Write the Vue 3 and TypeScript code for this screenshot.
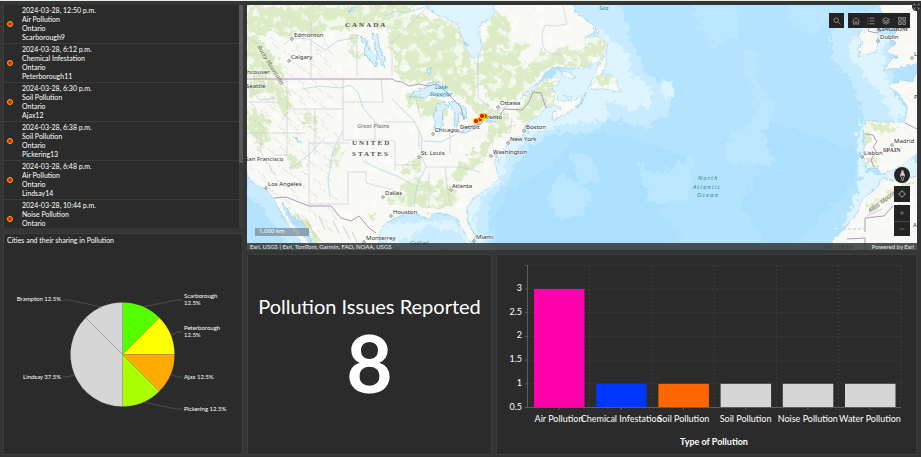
<script setup lang="ts">
interface Report { time: string; kind: string; province: string; place?: string }
interface Slice { label: string[]; value: number; color: string; x: number; y: number; anchor: 'start' | 'end'; leader: string }
interface Bar { label: string; value: number; color: string }
interface Place { name: string; x: number; y: number; cx?: number; cy?: number }

const reports: Report[] = [
  { time: '2024-03-28, 12:50 p.m.', kind: 'Air Pollution', province: 'Ontario', place: 'Scarborough9' },
  { time: '2024-03-28, 6:12 p.m.', kind: 'Chemical Infestation', province: 'Ontario', place: 'Peterborough11' },
  { time: '2024-03-28, 6:30 p.m.', kind: 'Soil Pollution', province: 'Ontario', place: 'Ajax12' },
  { time: '2024-03-28, 6:38 p.m.', kind: 'Soil Pollution', province: 'Ontario', place: 'Pickering13' },
  { time: '2024-03-28, 6:48 p.m.', kind: 'Air Pollution', province: 'Ontario', place: 'Lindsay14' },
  { time: '2024-03-28, 10:44 p.m.', kind: 'Noise Pollution', province: 'Ontario' },
]

const slices: Slice[] = [
  { label: ['Scarborough', '12.5%'], value: 12.5, color: '#55ff00', x: 184, y: 298, anchor: 'start', leader: 'M143 307L176 300H182' },
  { label: ['Peterborough', '12.5%'], value: 12.5, color: '#ffff00', x: 184, y: 330, anchor: 'start', leader: 'M171 335L178 332H182' },
  { label: ['Ajax 12.5%'], value: 12.5, color: '#ffaa00', x: 184, y: 379, anchor: 'start', leader: 'M171 375L178 377H182' },
  { label: ['Pickering 12.5%'], value: 12.5, color: '#aaff00', x: 184, y: 411, anchor: 'start', leader: 'M143 402L176 409H182' },
  { label: ['Lindsay 37.5%'], value: 37.5, color: '#d6d6d6', x: 61, y: 379, anchor: 'end', leader: 'M74 375L67 377H63' },
  { label: ['Brampton 12.5%'], value: 12.5, color: '#d6d6d6', x: 61, y: 301, anchor: 'end', leader: 'M102 307L69 300H63' },
]
const pie = { cx: 122.5, cy: 354.5, r: 52 }
const onCircle = (percent: number): string => {
  const a = (percent / 100) * Math.PI * 2
  return `${(pie.cx + pie.r * Math.sin(a)).toFixed(2)} ${(pie.cy - pie.r * Math.cos(a)).toFixed(2)}`
}
let turned = 0
const wedges = slices.map((s) => {
  const from = turned
  turned += s.value
  return { ...s, d: `M${pie.cx} ${pie.cy}L${onCircle(from)}A${pie.r} ${pie.r} 0 0 1 ${onCircle(turned)}Z` }
})

const bars: Bar[] = [
  { label: 'Air Pollution', value: 3, color: '#ff00aa' },
  { label: 'Chemical Infestation', value: 1, color: '#0036ff' },
  { label: 'Soil Pollution', value: 1, color: '#ff6600' },
  { label: 'Soil Pollution', value: 1, color: '#d6d6d6' },
  { label: 'Noise Pollution', value: 1, color: '#d6d6d6' },
  { label: 'Water Pollution', value: 1, color: '#d6d6d6' },
]
const ticks = [0.5, 1, 1.5, 2, 2.5, 3]
const yOf = (v: number): number => 407.5 - (v - 0.5) * 47.4
const xOf = (i: number): number => 559 + i * 62.2

const places: Place[] = [
  { name: 'Edmonton', x: 294, y: 37, cx: 292, cy: 39 },
  { name: 'Calgary', x: 291, y: 59, cx: 289, cy: 61 },
  { name: 'ncouver', x: 247, y: 74 },
  { name: 'Seattle', x: 246, y: 88 },
  { name: 'San Francisco', x: 245, y: 161 },
  { name: 'Los Angeles', x: 268, y: 186, cx: 266, cy: 188 },
  { name: 'Monterrey', x: 366, y: 240, cx: 364, cy: 242 },
  { name: 'Dallas', x: 385, y: 195, cx: 383, cy: 197 },
  { name: 'Houston', x: 393, y: 214, cx: 391, cy: 216 },
  { name: 'St. Louis', x: 421, y: 155, cx: 419, cy: 157 },
  { name: 'Atlanta', x: 452, y: 188, cx: 451, cy: 190 },
  { name: 'Miami', x: 476, y: 239, cx: 474, cy: 241 },
  { name: 'Chicago', x: 435, y: 132, cx: 433, cy: 134 },
  { name: 'Detroit', x: 460, y: 129, cx: 458, cy: 131 },
  { name: 'Ottawa', x: 500, y: 105, cx: 498, cy: 107 },
  { name: 'Toronto', x: 480, y: 119 },
  { name: 'Boston', x: 526, y: 129, cx: 524, cy: 131 },
  { name: 'New York', x: 510, y: 141, cx: 508, cy: 143 },
  { name: 'Washington', x: 493, y: 154, cx: 491, cy: 156 },
  { name: 'Dublin', x: 880, y: 39, cx: 878, cy: 41 },
  { name: 'Madrid', x: 894, y: 143, cx: 892, cy: 145 },
  { name: 'Lisbon', x: 864, y: 155, cx: 862, cy: 157 },
  { name: 'L', x: 914, y: 56, cx: 912, cy: 58 },
  { name: 'P', x: 914, y: 99 },
  { name: 'A', x: 913, y: 227 },
]

const america = 'M240 0H427L426 8L437 15L448 19L457 24L462 37L466 49L472 58L479 58L482 44L478 28L484 21L493 17L495 0H571L577 13L588 21L598 31L584 38L601 37L607 43L606 54L597 62L583 68L567 68L554 67L546 72L540 81L530 88L519 99L532 92L542 81L552 77L560 79L558 85L550 87L557 94L558 101L568 101L577 100L581 95L582 104L574 109L562 116L553 121L552 113L561 108L555 105L545 108L540 115L528 121L525 127L526 131L530 133L520 136L509 141L503 150L499 163L496 152L495 163L499 178L490 187L475 197L467 207L468 222L475 235L474 243L469 240L462 228L457 219L447 214L438 213L432 214L429 219L411 213L398 216L384 225L379 232L378 256H316L309 232L302 222L291 215L282 202L286 214L294 225L307 240L312 254H307L299 239L288 225L281 213L274 199L266 189L257 185L248 177L240 163Z'
const europe = 'M925 62L903 67L892 69L883 70L892 59L898 57L885 52L896 43L890 39L898 31L895 23L886 18L880 10L878 0H925ZM925 70L916 74L913 82L903 80L897 83L888 83L892 89L900 95L904 101L907 108L905 123L893 122L881 122L867 121L863 126L865 140L863 155L867 168L877 168L882 174L893 170L903 165L909 159L917 155L925 152Z'
const africa = 'M882 178L895 181L925 174V256H830L833 240L847 225L858 212L862 200L877 188Z'
const ireland = 'M857 33L864 31L867 28L873 28L877 32L878 41L876 52L866 54L858 57L860 52L857 49L863 43Z'
const newfoundland = 'M588 89L594 77L600 62L605 57L607 61L602 75L609 75L617 79L617 86L622 92L613 90L602 89Z'

/* Short ridge strokes scattered over the western mountain ranges. */
const ridges = Array.from({ length: 260 }, (_, i) => {
  const x = 248 + ((i * 37) % 83) + ((i * 13) % 7)
  const y = 36 + ((i * 53) % 197)
  return `M${x} ${y}l${1 + (i % 3)} ${2 + (i % 3)}l${i % 2} 1`
}).join('')

const greens: string[] = [
  'M247 5H418L405 14L392 18L381 28L370 22L351 30L332 28L317 36L299 32L286 39L270 31L260 36L247 30Z',
  'M247 34L259 36L272 53L284 70L286 88L292 105L285 118L276 101L267 91L253 97L247 91Z',
  'M247 105L258 108L268 124L270 140L258 150L247 125Z',
  'M400 18L421 12L437 19L458 27L470 52L472 67L480 78L473 101L450 96L434 80L411 84L394 72L396 55L388 42L387 24Z',
  'M415 91L423 99L434 98L448 104L445 120L428 116L414 107L404 98Z',
  'M494 13L512 20L509 43L530 44L519 59L528 66L544 50L556 61L546 70L522 94L506 103L490 100L480 83L470 66L481 55L486 34Z',
  'M590 31L606 39L605 53L585 66L560 67L551 53L566 48L579 51L589 43Z',
  'M541 83L559 80L552 90L555 103L540 112L526 122L514 123L522 102Z',
  'M469 101L486 103L500 112L510 117L512 128L501 136L489 146L486 162L472 169L458 183L449 176L461 163L474 151L488 137L493 123L475 115Z',
  'M415 160L426 155L418 171L408 174L399 169Z',
  'M414 175L427 184L445 180L458 191L461 202L446 209L428 210L417 203L411 209L388 202L384 191L401 190Z',
  'M337 145L343 153L334 170L327 163Z', 'M367 215L378 211L374 219L365 217Z',
  'M282 208L297 215L309 222L323 242H315L303 228Z',
  'M350 35L361 38L352 51L367 55L363 61L350 55Z',
  'M300 112L314 118L318 130L308 128Z', 'M285 152L298 158L305 172L292 170Z',
  'M596 75L614 80L611 86L594 86Z', 'M864 123L886 124L901 128L892 133L871 131L867 146L863 141Z',
  'M864 160L875 160L876 167L867 168Z', 'M866 207L888 193L903 183L917 181L903 188L887 200L872 211Z',
]
</script>

<template>
  <main class="dashboard">
    <div class="side">
      <section class="panel reports" aria-label="Reports">
        <ul class="report-list">
          <li v-for="(r, i) in reports" :key="i" class="report">
            <span class="marker"></span>
            <div class="report-text">
              <div>{{ r.time }}</div>
              <div>{{ r.kind }}</div>
              <div>{{ r.province }}</div>
              <div v-if="r.place">{{ r.place }}</div>
            </div>
          </li>
        </ul>
        <div class="track"><div class="thumb"></div></div>
      </section>

      <section class="panel cities">
        <h2 class="cities-title">Cities and their sharing in Pollution</h2>
        <svg class="chart" viewBox="4 248 238 206">
          <g v-for="w in wedges" :key="w.label[0]">
            <path :d="w.d" :fill="w.color" stroke="#888" stroke-opacity=".22" stroke-width=".6" />
            <path :d="w.leader" fill="none" stroke="#5c5c5c" stroke-width=".7" />
            <text class="pie-label" :x="w.x" :y="w.y" :text-anchor="w.anchor">
              <tspan v-for="(line, i) in w.label" :key="line" :x="w.x" :dy="i * 7">{{ line }}</tspan>
            </text>
          </g>
        </svg>
      </section>
    </div>

    <div class="content">
      <section class="map" aria-label="Map">
        <svg class="map-canvas" viewBox="247 5 670 245" preserveAspectRatio="xMidYMid slice">
          <defs>
            <filter id="rough" x="-5%" y="-5%" width="110%" height="110%">
              <feTurbulence type="fractalNoise" baseFrequency=".16" numOctaves="3" seed="4" />
              <feDisplacementMap in="SourceGraphic" scale="14" xChannelSelector="R" yChannelSelector="G" />
            </filter>
            <filter id="coast" x="-2%" y="-2%" width="104%" height="104%">
              <feTurbulence type="fractalNoise" baseFrequency=".3" numOctaves="2" seed="9" />
              <feDisplacementMap in="SourceGraphic" scale="4" xChannelSelector="R" yChannelSelector="G" />
            </filter>
            <filter id="mottle" x="0" y="0" width="100%" height="100%">
              <feTurbulence type="fractalNoise" baseFrequency=".11" numOctaves="4" seed="21" />
              <feColorMatrix values="0 0 0 0 .97  0 0 0 0 .97  0 0 0 0 .95  9 0 0 0 -4.9" />
            </filter>
            <clipPath id="land"><path :d="america + europe + africa + newfoundland + ireland" /></clipPath>
          </defs>
          <rect x="247" y="5" width="670" height="245" fill="#b4e3ff" />
          <g filter="url(#rough)">
            <path fill="#addfff" d="M575 140L603 132L650 143L686 155L678 190L660 213L684 235L650 252H500L492 222L510 190L547 170ZM720 140L765 120L812 135L858 150L850 185L800 240L772 252L740 205L760 170Z" />
            <path fill="#bbe6ff" d="M548 193L562 170L573 182L592 190L585 212L562 220L547 207ZM742 48L757 55L755 75L772 104L768 128L748 135L757 107L748 78ZM730 132L757 122L775 165L745 165L725 158ZM637 160L655 175L695 155L688 200L650 205ZM690 0H735L740 35L715 48L700 30ZM570 155L590 152L600 182L580 185ZM785 0H852L838 15L812 36L790 20Z" />
            <path fill="#c9ebff" d="M417 0H500L495 30L479 66L466 60L452 28ZM572 0H618L633 45L647 75L672 84L670 112L647 127L610 119L592 133L555 132L524 150L507 181L489 200L490 250H374L386 219L430 209L462 219L500 160L535 110L570 60ZM832 32L855 12L884 8L895 70L890 98L907 125L894 132L868 128L850 77L832 63Z" />
            <path fill="#def4ff" d="M417 0H500L492 22L479 62L470 58L458 28ZM598 25L611 40L630 55L628 72L653 88L650 107L628 109L604 99L610 119L584 123L566 124L532 135L510 152L500 181L478 201L475 220L484 246H467L455 221L378 224V240L397 245L430 225L460 234L465 205L522 92L559 72L596 65ZM851 40L868 20L887 37L883 70L896 96L907 110L895 121L878 91L865 76L848 55ZM660 86L671 81L674 94L665 99ZM862 120L865 170L883 176L907 160L917 155V178L887 181L870 194L858 215L832 245L856 198L860 177L857 135Z" />
            <path fill="#c8ebff" d="M247 160L269 184L283 207L306 245L286 242L265 212L247 194Z" />
          </g>
          <g filter="url(#coast)">
            <g fill="#f8f8f4" stroke="#8ac9e8" stroke-width=".6">
              <path :d="america" /><path :d="europe" /><path :d="africa" /><path :d="newfoundland" /><path :d="ireland" />
              <path d="M561 71L568 72L576 77L571 79L564 76ZM563 95L573 98L569 100ZM586 92L581 103L576 107L584 100Z" />
            </g>
          </g>
          <g clip-path="url(#land)">
            <g filter="url(#rough)">
              <path v-for="g in greens" :key="g" :d="g" fill="#dcecc7" />
              <path fill="#f8f8f4" d="M425 26l9 3l-3 6zM459 67l12 5l-9 3zM497 45l14 4l-9 6zM493 76l12 3l-9 6zM520 63l12 3l-8 4zM400 65l12 3l-7 4zM564 56l14 2l-12 3zM432 189l11 4l-7 3z" />
            </g>
            <rect x="247" y="5" width="670" height="245" filter="url(#mottle)" opacity=".75" />
            <path :d="ridges" fill="none" stroke="#b5afa0" stroke-width=".6" opacity=".5" />
            <path d="M289 212l7 10M297 214l10 15M307 221l9 17M319 216l6 14M333 221l6 12M343 226l7 13M352 232l5 10M870 208l12-8M885 197l12-8M899 189l12-6M867 216l15-7" fill="none" stroke="#c6beb0" stroke-width="1" opacity=".7" />
          </g>
          <g filter="url(#coast)" fill="#d8f1ff" stroke="#83c5e7" stroke-width=".7">
            <path d="M409 97L417 91L427 87L427 83L441 82L446 86L449 96L440 97L434 93L424 98L416 96Z" />
            <path d="M435 130L434 114L438 105L443 102L449 106L443 110L442 126L439 133Z" />
            <path d="M448 101L461 104L467 111L465 118L459 112L458 125L454 127L455 113Z" />
            <path d="M460 132L469 127L481 122L477 127L466 133Z" /><path d="M485 121L490 117L499 118L495 122Z" />
            <path d="M360 37L367 41L369 50L377 57L376 67L370 60L364 54L366 46Z" /><path d="M372 33L377 35L380 49L385 60L384 67L379 57L375 48Z" />
            <path d="M427 69l4-1l-1 7l-3-2zM348 12l7-6v3zM294 137l4 2l4 4l-4-2zM464 42l5 3l-3 1z" />
          </g>
          <g fill="none" stroke="#acd9ed" stroke-width=".8">
            <path d="M284 45L291 38L309 39L325 50L337 41L354 38L359 35M302 89L320 86L340 88L350 85L358 92L363 108L377 124L381 128M392 99L402 109L414 121L422 137L421 155L426 167L417 185L414 207M325 137L310 154L291 168M363 161L379 169L399 177L413 185M343 130L333 151L328 181L330 197M384 16L396 11L405 13L425 7M253 92L260 100L276 98M423 141L441 142L455 135M517 99L506 107L497 110" />
          </g>
          <g fill="none" stroke="#c9c6d1" stroke-width=".6">
            <path d="M311 22V78M357 35V77M392 41V77M392 43L426 8M343 78V109H287V78M343 102H383L381 78M343 109V140H375M383 122H416M375 122V140L395 141V161M349 143H309V204H348V172H366M366 172V183L393 190M395 161V171M395 165H419M426 167H460M429 173V208M445 167L450 206M460 167L480 172M419 130L419 148M450 132V154M315 155V109M287 110V155H274M247 102H275M247 133H305M261 133V153L275 175M478 53V98L490 107M563 6L567 24L556 26L545 25L542 34L543 47L549 53L562 55M498 132L510 133L512 118M415 95L421 118" />
          </g>
          <g fill="none" stroke="#b29abb" stroke-width="1">
            <path d="M247 79H393L395 81L402 82L409 86L419 84L428 86L437 84L444 90L453 99L461 107L464 120M461 128L481 124L485 118L499 117L504 109L522 110L529 102L533 92L541 93L546 108M274 198L286 197L309 206H331L341 218L351 221L359 216L369 228L376 233M865 134L873 135L877 142L873 147L876 151L871 160L874 167M905 123L917 129M886 29L876 33L868 31L869 28M893 206L884 216L865 218V232M847 239L865 238V250M900 204L897 207" />
            <path d="M843 229H865" stroke-dasharray="3 2" stroke-width=".6" />
          </g>
          <g class="serif">
            <text class="large" x="345" y="27">CANADA</text>
            <text class="large" x="352" y="145">UNITED</text>
            <text class="large" x="352" y="156">STATES</text>
            <text x="877" y="31">KINGDOM</text>
            <text x="883" y="152">SPAIN</text>
            <text x="824" y="249">WESTERN</text>
          </g>
          <g class="water">
            <text x="441" y="89" text-anchor="middle">Lake</text><text x="441" y="96" text-anchor="middle">Superior</text>
            <text x="599" y="10">Sea</text>
            <g class="ocean"><text x="698" y="180">North</text><text x="693" y="189">Atlantic</text><text x="697" y="197">Ocean</text></g>
            <text x="419" y="245" text-anchor="middle">Gulf of</text>
          </g>
          <text class="terrain" x="357" y="128">Great Plains</text>
          <text class="terrain" transform="translate(257 47) rotate(58)">Rocky Mountains</text>
          <text class="terrain" transform="translate(870 213) rotate(-36)">Atlas Mountains</text>
          <g v-for="p in places" :key="p.name">
            <circle v-if="p.cx" :cx="p.cx" :cy="p.cy" r="1.3" fill="#fff" stroke="#555" stroke-width=".6" />
            <text class="place" :x="p.x" :y="p.y">{{ p.name }}</text>
          </g>
          <g fill="#ff1400" stroke="#ffe600" stroke-width="1">
            <circle cx="485" cy="116" r="2.5" /><circle cx="480" cy="119.500" r="2.500" /><circle cx="476" cy="121" r="2.700" /><circle cx="482" cy="116" r="2.700" />
          </g>
        </svg>

        <div class="scale">1,000 km</div>
        <div class="toolbar">
          <button class="tool" aria-label="Search">
            <svg viewBox="0 0 16 16"><circle cx="6.500" cy="6.500" r="4.500" /><path d="M10 10l5 5" /></svg>
          </button>
          <div class="tool-group">
            <button class="tool" aria-label="Home"><svg viewBox="0 0 16 16"><path d="M1 8L8 1.500L15 8M3 7v7.500h3.500v-5h3v5H13V7" /></svg></button>
            <button class="tool" aria-label="Legend"><svg viewBox="0 0 16 16"><path d="M1 2.500h2M1 8h2M1 13.500h2M5.500 2.500H15M5.500 8H15M5.500 13.500H15" /></svg></button>
            <button class="tool" aria-label="Layers"><svg viewBox="0 0 16 16"><path d="M8 1.500L15 5L8 8.500L1 5ZM1 8l7 3.500L15 8M1 11l7 3.500L15 11" /></svg></button>
            <button class="tool" aria-label="Basemap gallery"><svg viewBox="0 0 16 16"><path d="M1 1h5.500v5.500H1ZM9.500 1H15v5.500H9.500ZM1 9.500h5.500V15H1ZM9.500 9.500H15V15H9.500ZM3 4h2M11 4h2M3 12h2M11 12h2" /></svg></button>
          </div>
        </div>
        <div class="navigation">
          <button class="nav compass" aria-label="Compass"><svg viewBox="0 0 16 16"><path d="M8 0L11 8L8 16L5 8Z" /><path d="M8 0L11 8H5Z" class="solid" /></svg></button>
          <button class="nav" aria-label="Find my location"><svg viewBox="0 0 16 16"><circle cx="8" cy="8" r="5" /><path d="M8 0v4M8 12v4M0 8h4M12 8h4" /></svg></button>
          <div class="zoom">
            <button class="nav" aria-label="Zoom in"><svg viewBox="0 0 16 16"><path d="M8 2.500v11M2.500 8h11" /></svg></button>
            <button class="nav" aria-label="Zoom out"><svg viewBox="0 0 16 16"><path d="M1 8h14" /></svg></button>
          </div>
        </div>
        <footer class="attribution">
          <span>Esri, USGS | Esri, TomTom, Garmin, FAO, NOAA, USGS</span>
          <span>Powered by <a href="#">Esri</a></span>
        </footer>
      </section>
      <button class="expand" aria-label="Expand"><svg viewBox="0 0 16 16"><path d="M2 6V2h4M10 2h4v4M14 10v4h-4M6 14H2v-4M2 2l4 4M14 2l-4 4M14 14l-4-4M2 14l4-4" /></svg></button>

      <div class="figures">
        <section class="panel indicator">
          <h2 class="indicator-title">Pollution Issues Reported</h2>
          <div class="indicator-value">8</div>
        </section>
        <section class="panel types" aria-label="Reports by type">
          <svg class="chart" viewBox="497 255 419 199">
            <g stroke="#3c3c3c" stroke-width="1" stroke-dasharray="2 2">
              <path v-for="n in 6" :key="'h' + n" :d="`M528 ${yOf(0.5 + n * 0.5)}H901`" />
              <path v-for="n in 6" :key="'v' + n" :d="`M${527.5 + n * 62.2} 265V407`" />
            </g>
            <rect v-for="(b, i) in bars" :key="'b' + i" :x="xOf(i) - 25" :y="yOf(b.value)" width="50.500" :height="407.5 - yOf(b.value)" :fill="b.color" />
            <path d="M527.500 265V407.500H901M525 265.500h3" fill="none" stroke="#5c5c5c" />
            <g v-for="t in ticks" :key="t">
              <path :d="`M525 ${yOf(t)}h3`" stroke="#5c5c5c" />
              <text class="axis" x="522" :y="yOf(t) + 2" text-anchor="end">{{ t }}</text>
            </g>
            <g v-for="(b, i) in bars" :key="'l' + i">
              <path :d="`M${xOf(i)} 408v2`" stroke="#5c5c5c" />
              <text class="axis" :x="xOf(i)" y="422" text-anchor="middle">{{ b.label }}</text>
            </g>
            <text class="axis-title" x="714" y="445" text-anchor="middle">Type of Pollution</text>
          </svg>
        </section>
      </div>
    </div>
  </main>
</template>

<style>
body { background: #353535; }
</style>

<style scoped>
* { box-sizing: border-box; }
h2 { margin: 0; font-weight: 400; }
button { padding: 0; border: 0; color: #a8a8a8; background: #242424; display: grid; place-items: center; cursor: pointer; }
button svg { fill: none; stroke: currentColor; stroke-width: 1.4; display: block; }

.dashboard {
  display: grid;
  grid-template-columns: minmax(0, 240fr) minmax(0, 670fr);
  gap: 4px;
  height: 100vh;
  padding: 4px 4px 2px 3px;
  border-top: 1px solid #e4eee8;
  background: #353535;
  color: #fff;
  font-family: Lato, "Liberation Sans", sans-serif;
}
.side { display: grid; grid-template-rows: minmax(0, 223fr) minmax(0, 222fr); gap: 5px; min-height: 0; }
.content { position: relative; display: grid; grid-template-rows: minmax(0, 245fr) minmax(0, 201fr); gap: 4px; min-height: 0; }
.figures { display: grid; grid-template-columns: minmax(0, 245fr) minmax(0, 421fr); gap: 4px; min-height: 0; }
.panel { background: #2b2b2b; border: 1px solid #3e3e3e; min-width: 0; min-height: 0; overflow: hidden; }

.reports { display: flex; border-width: 0 0 0 1px; }
.report-list { flex: 1; margin: 0; padding: 0; list-style: none; overflow: hidden; }
.report { display: flex; align-items: center; gap: 9px; height: 39px; padding: 1px 3px; border-bottom: 1px solid #3b3b3b; }
.marker { width: 6px; height: 6px; border-radius: 50%; background: #ff1400; border: 1px solid #e5c000; }
.report-text { align-self: flex-start; font-size: 7px; line-height: 9px; }
.track { width: 4px; background: #3b3b3b; }
.thumb { height: 71%; background: #595959; }

.cities { display: flex; flex-direction: column; }
.cities-title { padding: 0 3px; font-size: 7px; line-height: 12px; height: 14px; }
.chart { flex: 1; display: block; width: 100%; min-height: 0; }
.types .chart { height: 100%; }
.pie-label { font-size: 6px; fill: #fff; }
.axis { font-size: 9px; fill: #fff; }
.axis-title { font-size: 9px; font-weight: 700; fill: #fff; }

.map { position: relative; overflow: hidden; min-height: 0; }
.map-canvas { display: block; width: 100%; height: 100%; }
.map-canvas text { font-family: "Noto Sans", sans-serif; }
.place { font-size: 6px; fill: #303030; paint-order: stroke; stroke: #fff; stroke-width: 1px; stroke-opacity: .7; }
.map-canvas .serif text { font-family: "Liberation Serif", serif; font-size: 6px; font-weight: 700; fill: #554f55; }
.map-canvas .serif .large { font-size: 7px; letter-spacing: 2px; }
.water text { font-size: 6px; font-style: italic; fill: #33889e; }
.water .ocean text { letter-spacing: 1px; }
.terrain { font-size: 6px; font-style: italic; fill: #6c6c64; }

.scale { position: absolute; left: 8px; bottom: 14px; width: 54px; height: 8px; padding-left: 3px; font: 6px/7px "Noto Sans", sans-serif; background: rgba(110, 130, 140, .65); border: 1px solid #9d9d98; border-top: 0; }
.toolbar { position: absolute; top: 8px; right: 7px; display: flex; gap: 4px; }
.tool-group { display: flex; background: #242424; }
.tool { width: 15px; height: 15px; }
.tool-group .tool { width: 15px; }
.tool-group .tool:last-child { width: 17px; }
.tool svg { width: 8px; height: 8px; }
.navigation { position: absolute; right: 7px; bottom: 14px; display: grid; gap: 3px; }
.nav { width: 16px; height: 16px; }
.nav svg { width: 8px; height: 8px; }
.compass { border-radius: 50%; }
.compass svg { width: 11px; height: 11px; }
.solid { fill: #ddd; }
.zoom { display: grid; }
.zoom .nav + .nav { height: 15px; border-top: 1px solid #444; }
.zoom svg { width: 6px; height: 6px; }
.expand { position: absolute; top: -3px; right: -4px; width: 9px; height: 9px; border-radius: 50%; }
.expand svg { width: 7px; height: 7px; }
.attribution { position: absolute; left: 0; right: 0; bottom: 0; display: flex; justify-content: space-between; height: 7px; padding: 0 3px; background: rgba(54, 58, 59, .88); color: #e8e8e8; font-size: 6px; line-height: 7px; }
.attribution a { color: inherit; text-decoration: none; }

.indicator { display: flex; flex-direction: column; align-items: center; padding-top: 38px; }
.indicator-title { font-size: 20px; line-height: 26px; white-space: nowrap; }
.indicator-value { font-size: 80px; line-height: 86px; font-weight: 700; }
</style>
